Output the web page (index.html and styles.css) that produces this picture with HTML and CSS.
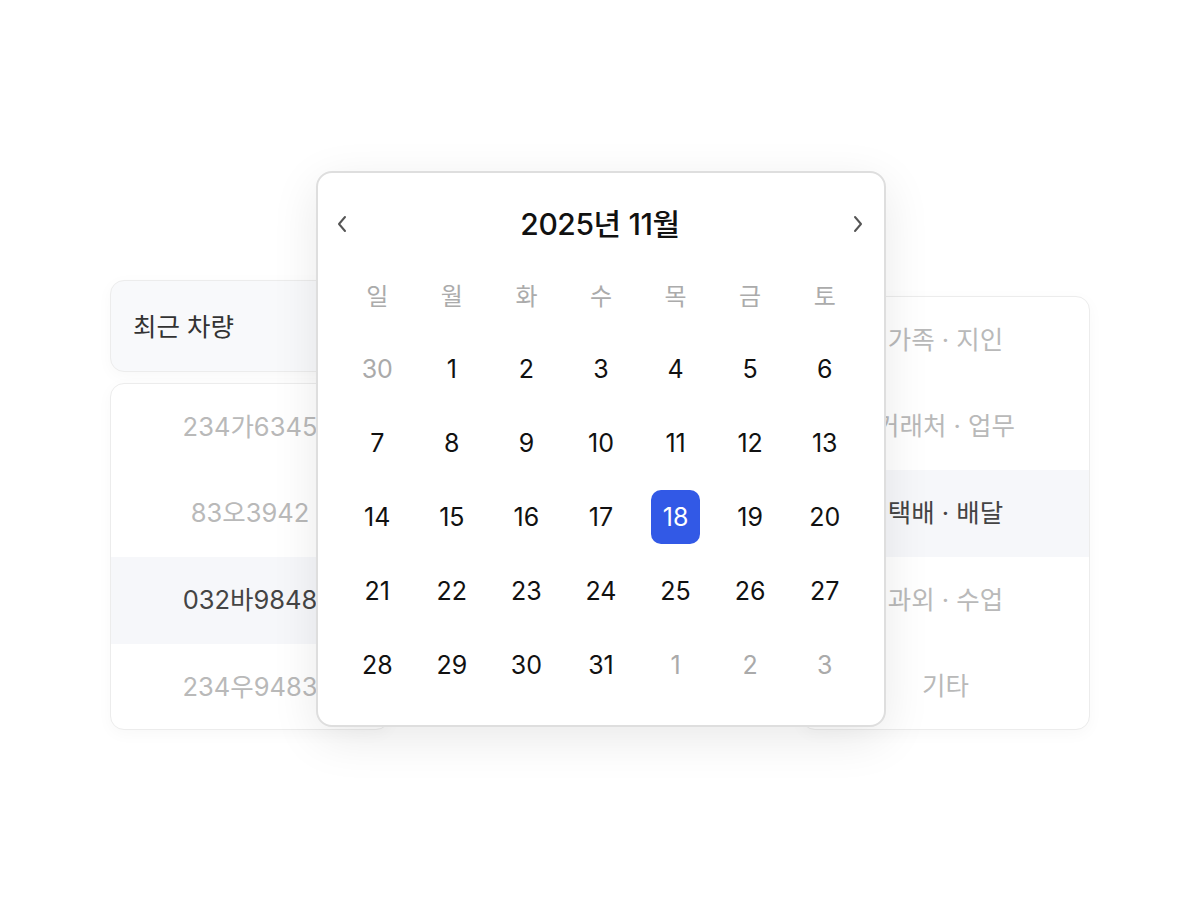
FILE: index.html
```html
<!DOCTYPE html>
<html lang="ko">
<head>
<meta charset="utf-8">
<title>달력</title>
<link rel="stylesheet" href="styles.css">
</head>
<body>
<div class="stage">
  <div class="left-group">
    <div class="recent-head">최근 차량</div>
    <ul class="list list-left">
      <li class="row">234가6345</li>
      <li class="row">83오3942</li>
      <li class="row row-active">032바9848</li>
      <li class="row">234우9483</li>
    </ul>
  </div>

  <ul class="list list-right">
    <li class="row">가족 · 지인</li>
    <li class="row">거래처 · 업무</li>
    <li class="row row-active">택배 · 배달</li>
    <li class="row">과외 · 수업</li>
    <li class="row">기타</li>
  </ul>

  <div class="calendar">
    <div class="cal-head">
      <span class="nav">
        <svg width="10" height="18" viewBox="0 0 10 18"><path d="M8 2 L2 9 L8 16" fill="none" stroke="#555" stroke-width="2" stroke-linecap="round" stroke-linejoin="round"/></svg>
      </span>
      <span class="cal-title">2025년 11월</span>
      <span class="nav">
        <svg width="10" height="18" viewBox="0 0 10 18"><path d="M2 2 L8 9 L2 16" fill="none" stroke="#555" stroke-width="2" stroke-linecap="round" stroke-linejoin="round"/></svg>
      </span>
    </div>
    <div class="cal-grid">
      <span class="wd">일</span><span class="wd">월</span><span class="wd">화</span><span class="wd">수</span><span class="wd">목</span><span class="wd">금</span><span class="wd">토</span>
      <span class="d dim">30</span><span class="d">1</span><span class="d">2</span><span class="d">3</span><span class="d">4</span><span class="d">5</span><span class="d">6</span>
      <span class="d">7</span><span class="d">8</span><span class="d">9</span><span class="d">10</span><span class="d">11</span><span class="d">12</span><span class="d">13</span>
      <span class="d">14</span><span class="d">15</span><span class="d">16</span><span class="d">17</span><span class="d"><span class="sel">18</span></span><span class="d">19</span><span class="d">20</span>
      <span class="d">21</span><span class="d">22</span><span class="d">23</span><span class="d">24</span><span class="d">25</span><span class="d">26</span><span class="d">27</span>
      <span class="d">28</span><span class="d">29</span><span class="d">30</span><span class="d">31</span><span class="d dim">1</span><span class="d dim">2</span><span class="d dim">3</span>
    </div>
  </div>
</div>
</body>
</html>
```

FILE: styles.css
```css
* { box-sizing: border-box; }
html, body {
  margin: 0;
  padding: 0;
  background: #ffffff;
}
body {
  font-family: Inter, "Noto Sans CJK KR", sans-serif;
  color: #111;
}
.stage {
  position: relative;
  width: 1200px;
  height: 900px;
  overflow: hidden;
}
.left-group {
  position: absolute;
  left: 110px;
  top: 280px;
  width: 280px;
  display: flex;
  flex-direction: column;
  gap: 11px;
}
.recent-head {
  height: 92px;
  display: flex;
  align-items: center;
  padding: 0 0 4px 22px;
  font-size: 25.5px;
  color: #333;
  background: #f8f9fb;
  border: 1.5px solid #ececec;
  border-radius: 14px;
  box-shadow: 0 4px 16px rgba(0,0,0,0.03);
}
.list {
  list-style: none;
  margin: 0;
  padding: 0;
  background: #fff;
  border: 1.5px solid #ececec;
  border-radius: 14px;
  overflow: hidden;
  box-shadow: 0 4px 16px rgba(0,0,0,0.03);
}
.list-left { height: 347px; }
.list-right {
  position: absolute;
  left: 801px;
  top: 296px;
  width: 289px;
  height: 434px;
}
.row {
  height: 86.6px;
  display: flex;
  align-items: center;
  justify-content: center;
  padding-bottom: 6px;
  font-size: 25.5px;
  color: #b9b9b9;
}
.row-active {
  background: #f6f7fa;
  color: #444;
}
.calendar {
  position: absolute;
  left: 316px;
  top: 171px;
  width: 570px;
  height: 556px;
  background: #fff;
  border: 2px solid #dedede;
  border-radius: 16px;
  padding: 24px 22px 22px;
  box-shadow: 0 12px 48px rgba(0,0,0,0.09);
}
.cal-head {
  height: 50px;
  margin: 0 -6px 11px -8px;
  display: flex;
  align-items: center;
  justify-content: space-between;
}
.nav {
  width: 20px;
  height: 24px;
  display: flex;
  align-items: center;
  justify-content: center;
  margin-top: 4px;
}
.cal-title {
  font-size: 30px;
  font-weight: 500;
  color: #111;
  letter-spacing: -0.4px;
}
.cal-grid {
  display: grid;
  grid-template-columns: repeat(7, 1fr);
  grid-auto-rows: 74px;
}
.wd, .d {
  display: flex;
  align-items: center;
  justify-content: center;
  font-size: 24px;
}
.wd { color: #ababab; padding-bottom: 2px; }
.d { color: #111; font-size: 25px; }
.d.dim { color: #aaa; }
.sel {
  width: 49px;
  height: 54px;
  border-radius: 10px;
  background: #3259e6;
  color: #fff;
  display: flex;
  align-items: center;
  justify-content: center;
}
```
